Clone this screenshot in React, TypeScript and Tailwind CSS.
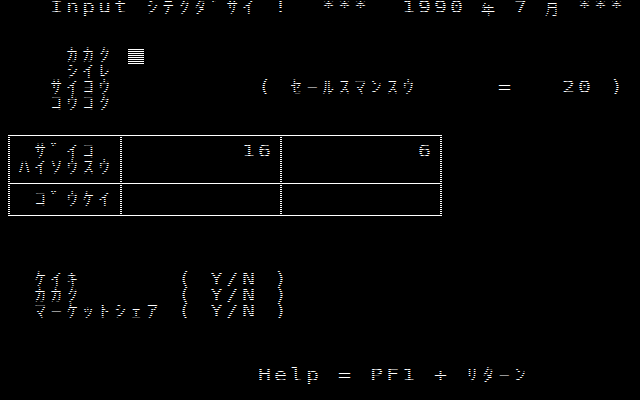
import React from 'react';

// half-width katakana get stretched to fill the 16px cell like the old terminal font
const KANA = /[\uFF61-\uFF9F]/;
const WIDE = /[\u3000-\u9FFF]/;

const Glyph: React.FC<{ ch: string }> = ({ ch }) => {
  if (ch === '█') return <span className="block h-4 w-4 shrink-0 bg-white" />;
  if (ch === ' ') return <span className="block h-4 w-4 shrink-0" />;

  let cls = "font-['DejaVu_Sans_Mono',monospace] text-[18px] scale-x-[1.2] -translate-y-[1px]";
  if (KANA.test(ch)) {
    cls = "font-['Noto_Sans_CJK_JP',sans-serif] text-[17px] scale-x-[1.35] -translate-y-[2px]";
  } else if (WIDE.test(ch)) {
    cls = "font-['Noto_Sans_CJK_JP',sans-serif] text-[14px]";
  }

  return (
    <span className="flex h-4 w-4 shrink-0 justify-center">
      <span className={`block leading-4 whitespace-pre ${cls}`}>{ch}</span>
    </span>
  );
};

const Line: React.FC<{ text: string; right?: boolean }> = ({ text, right }) => (
  <div className={`flex h-4 ${right ? 'justify-end' : ''}`}>
    {[...text].map((ch, i) => (
      <Glyph key={i} ch={ch} />
    ))}
  </div>
);

const topRows = [
  '   Input ｼﾃｸﾀﾞｻｲ !  ***  1990 年 7 月 ***',
  '',
  '',
  '    ｶｶｸ █',
  '    ｼｲﾚ',
  '   ｻｲﾖｳ         ( ｾｰﾙｽﾏﾝｽｳ     =   20 )',
  '   ｺｳｺｸ',
  '',
];

const bottomRows = [
  '',
  '',
  '',
  '  ｹｲｷ      ( Y/N )',
  '  ｶｶｸ      ( Y/N )',
  '  ﾏｰｹｯﾄｼｪｱ ( Y/N )',
  '',
  '',
  '',
  '                Help = PF1 + ﾘﾀｰﾝ',
  '',
];

const App: React.FC = () => {
  return (
    <div className="relative h-[400px] w-[640px] overflow-hidden bg-black text-white">
      {topRows.map((row, i) => (
        <Line key={`t${i}`} text={row} />
      ))}

      {/* results table */}
      <div className="ml-[8px] mt-[7px] w-[434px] border-t border-white">
        <div className="grid h-[48px] grid-cols-[112px_160px_162px] border-b border-white">
          <div className="border-l-2 border-white pl-[6px] pt-[8px]">
            <Line text=" ｻﾞｲｺ" />
            <Line text="ﾊｲｿｳｽｳ" />
          </div>
          <div className="border-l-2 border-white pr-[8px] pt-[8px]">
            <Line text="16" right />
          </div>
          <div className="border-x-2 border-white pr-[8px] pt-[8px]">
            <Line text="6" right />
          </div>
        </div>
        <div className="grid h-[32px] grid-cols-[112px_160px_162px] border-b border-white">
          <div className="border-l-2 border-white pl-[6px] pt-[8px]">
            <Line text=" ｺﾞｳｹｲ" />
          </div>
          <div className="border-l-2 border-white" />
          <div className="border-x-2 border-white" />
        </div>
      </div>

      <div className="mt-[8px]">
        {bottomRows.map((row, i) => (
          <Line key={`b${i}`} text={row} />
        ))}
      </div>

      {/* interlace scanlines */}
      <div className="pointer-events-none absolute inset-0 bg-[image:repeating-linear-gradient(to_bottom,#000_0px,#000_1px,transparent_1px,transparent_2px)]" />
    </div>
  );
};

export default App;
